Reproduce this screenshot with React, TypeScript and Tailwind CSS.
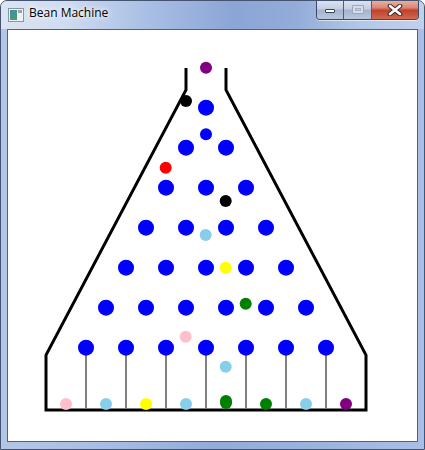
const pegRows = [0, 1, 2, 3, 4, 5, 6]

const balls = [
  { x: 206, y: 67.7, c: '#800080' },
  { x: 186, y: 101, c: '#000000' },
  { x: 206, y: 134.3, c: '#0000ff' },
  { x: 165.7, y: 167.7, c: '#ff0000' },
  { x: 225.7, y: 201, c: '#000000' },
  { x: 205.7, y: 235, c: '#87ceeb' },
  { x: 225.7, y: 267.7, c: '#ffff00' },
  { x: 245.7, y: 303.7, c: '#008000' },
  { x: 185.7, y: 336.7, c: '#ffc0cb' },
  { x: 225.7, y: 366.7, c: '#87ceeb' },
  // slots
  { x: 66, y: 404, c: '#ffc0cb' },
  { x: 106, y: 404, c: '#87ceeb' },
  { x: 146, y: 404, c: '#ffff00' },
  { x: 186, y: 404, c: '#87ceeb' },
  { x: 226, y: 401, c: '#008000' },
  { x: 226, y: 403, c: '#008000' },
  { x: 266, y: 404, c: '#008000' },
  { x: 306, y: 404, c: '#87ceeb' },
  { x: 346, y: 404, c: '#800080' },
]

const WindowIcon = () => (
  <svg width="16" height="14" viewBox="0 0 16 14">
    <rect x="0.5" y="0.5" width="15" height="13" fill="#eef1f5" stroke="#8a93a0" />
    <rect x="2" y="2" width="7" height="10" fill="url(#ig)" />
    <rect x="10" y="2" width="4" height="3" fill="#9aa3ad" />
    <defs>
      <linearGradient id="ig" x1="0" y1="0" x2="1" y2="1">
        <stop offset="0" stopColor="#3f8fa6" />
        <stop offset="1" stopColor="#4ca06a" />
      </linearGradient>
    </defs>
  </svg>
)

const CaptionButtons = () => (
  <div className="absolute right-[5px] top-[-1px] flex h-[20px] overflow-hidden rounded-b-[4px] border border-t-0 border-[#3b4a66] shadow-[0_1px_0_rgba(255,255,255,0.6)]">
    <div className="flex w-[27px] items-center justify-center border-r border-[#4d5c78] bg-[linear-gradient(180deg,#dde5f1_0%,#c3cfe3_45%,#a5b4cf_55%,#b9c7de_100%)]">
      <div className="mt-[3px] h-[4px] w-[10px] rounded-[1px] border border-[#34425c] bg-white" />
    </div>
    <div className="flex w-[28px] items-center justify-center border-r border-[#4d5c78] bg-[linear-gradient(180deg,#dde5f1_0%,#c3cfe3_45%,#a5b4cf_55%,#b9c7de_100%)]">
      <div className="h-[9px] w-[12px] rounded-[1px] border border-[#9aa6ba] bg-[#d5dcea] p-[2px]">
        <div className="h-full w-full border border-[#a7b2c4] bg-[#c4cddd]" />
      </div>
    </div>
    <div className="flex w-[46px] items-center justify-center bg-[linear-gradient(180deg,#eeb3a5_0%,#d88874_40%,#c2412b_55%,#d06a52_100%)]">
      <svg width="16" height="12" viewBox="0 0 16 12">
        <path d="M3 2 L13 10 M13 2 L3 10" stroke="#3a2a2a" strokeWidth="4.6" strokeLinecap="round" />
        <path d="M3 2 L13 10 M13 2 L3 10" stroke="#ffffff" strokeWidth="2.6" strokeLinecap="round" />
      </svg>
    </div>
  </div>
)

const BeanBoard = () => (
  <svg width="409" height="410" viewBox="8 30 409 410" className="block">
    <polyline
      points="186,68 186,90 46,355 46,410 366,410 366,355 226,90 226,68"
      fill="none"
      stroke="#000"
      strokeWidth="3"
    />
    {[0, 1, 2, 3, 4, 5, 6].map((j) => (
      <line key={j} x1={86 + 40 * j} y1={348} x2={86 + 40 * j} y2={409} stroke="#808080" strokeWidth="2" />
    ))}
    {pegRows.map((i) =>
      Array.from({ length: i + 1 }).map((_, j) => (
        <circle key={`${i}-${j}`} cx={206 - 20 * i + 40 * j} cy={107.7 + 40 * i} r="8" fill="#0000ff" />
      ))
    )}
    {balls.map((b, k) => (
      <circle key={k} cx={b.x} cy={b.y} r="6" fill={b.c} />
    ))}
  </svg>
)

export default function App() {
  return (
    <div className="relative flex h-[450px] w-[425px] flex-col overflow-hidden rounded-t-[7px] border border-[#44546f] bg-[linear-gradient(90deg,#b3c6e8_0%,#a8bde4_25%,#92abd9_50%,#9cb3de_75%,#a9bfe5_100%)]">
      <div className="relative h-[28px] shrink-0 bg-[linear-gradient(90deg,#dbe4f3_0%,#cfdcf0_15%,#a8bee4_35%,#8ba5d6_55%,#93acd9_70%,#b4c7e8_85%,#c1d1ec_100%)]">
        <div className="absolute left-[7px] top-[7px]">
          <WindowIcon />
        </div>
        <div className="absolute left-[28px] top-[4px] text-[12px] leading-[16px] text-black [font-family:'Segoe_UI','Open_Sans',sans-serif] [text-shadow:0_0_8px_#fff,0_0_4px_#fff]">
          Bean Machine
        </div>
        <CaptionButtons />
      </div>
      <div className="mx-[6px] mb-[7px] flex-1 border border-[#4f6283] bg-white">
        <BeanBoard />
      </div>
    </div>
  )
}
